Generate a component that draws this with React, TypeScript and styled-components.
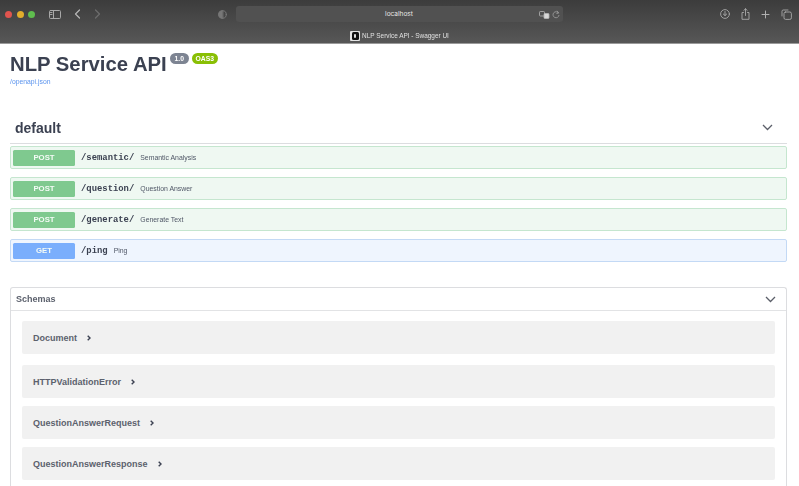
import React from "react";
import styled, { createGlobalStyle } from "styled-components";

const Global = createGlobalStyle`
  html, body { margin: 0; padding: 0; background: #fff; }
  body { width: 799px; height: 486px; overflow: hidden; font-family: "Liberation Sans", Arial, sans-serif; }
  #root { width: 799px; height: 486px; overflow: hidden; }
`;

const Shell = styled.div`
  width: 799px;
  height: 486px;
  overflow: hidden;
  filter: blur(0.6px);
`;

const Chrome = styled.header`
  height: 44px;
  box-sizing: border-box;
  background: linear-gradient(#3c3c3c, #575757);
  border-bottom: 1px solid #9a9a9a;
  display: flex;
  flex-direction: column;
`;

const Toolbar = styled.div`
  height: 28px;
  display: flex;
  align-items: center;
  padding: 0 7px 1px 5px;
`;

const Dot = styled.span<{ $c: string }>`
  width: 7px;
  height: 7px;
  border-radius: 50%;
  background: ${(p) => p.$c};
  margin-right: 4.5px;
`;

const Icon = styled.svg<{ $ml: number }>`
  flex: none;
  margin-left: ${(p) => p.$ml}px;
  fill: none;
  stroke-linecap: round;
  stroke-linejoin: round;
`;

const UrlBar = styled.div`
  width: 327px;
  height: 16px;
  margin-left: 9px;
  border-radius: 3px;
  background: #515151;
  position: relative;
  display: flex;
  align-items: center;
  justify-content: center;
  color: #e8e8e8;
  font-size: 6.5px;
  font-family: "Inter", sans-serif;
`;

const UrlTools = styled.div`
  position: absolute;
  right: 3px;
  top: 4px;
  display: flex;
  align-items: center;
  gap: 2px;
`;

const Spacer = styled.div`
  flex: 1;
`;

const TabStrip = styled.div`
  flex: 1;
  display: flex;
  align-items: center;
  justify-content: center;
  gap: 2px;
  color: #e0e0e0;
  font-size: 6.45px;
  padding: 0 0 1px 0;
`;

const Favicon = styled.span`
  width: 10px;
  height: 10px;
  border-radius: 1px;
  background: #e4e4e4;
  display: flex;
  align-items: center;
  justify-content: center;
`;

const FaviconCore = styled.span`
  width: 7px;
  height: 8px;
  border-radius: 1.5px;
  background: #111;
  display: flex;
  align-items: center;
  justify-content: center;
  &::after {
    content: "";
    width: 2px;
    height: 4px;
    border-radius: 1px;
    background: #ddd;
  }
`;

const Main = styled.main`
  padding: 0 12px 0 10px;
`;

const TitleRow = styled.div`
  display: flex;
  align-items: flex-start;
  height: 28px;
  padding-top: 7px;
`;

const Title = styled.h1`
  margin: 0;
  font-size: 20.3px;
  line-height: 26px;
  font-weight: 700;
  color: #3b4151;
`;

const Badge = styled.span<{ $bg: string; $ml: number; $w: number }>`
  width: ${(p) => p.$w}px;
  height: 11px;
  margin: 2px 0 0 ${(p) => p.$ml}px;
  border-radius: 6px;
  background: ${(p) => p.$bg};
  color: #fff;
  font-size: 6.8px;
  font-weight: 700;
  line-height: 11px;
  text-align: center;
`;

const SpecLink = styled.a`
  display: block;
  margin-top: -1px;
  height: 8px;
  line-height: 8px;
  font-size: 6.8px;
  color: #5b94ee;
`;

const TagRow = styled.div`
  margin-top: 26px;
  height: 32px;
  box-sizing: border-box;
  border-bottom: 1px solid #dcdde0;
  display: flex;
  align-items: center;
  justify-content: space-between;
  padding: 0 14px 0 5px;
  margin-bottom: 2px;
`;

const TagName = styled.h2`
  margin: 0;
  font-size: 14px;
  font-weight: 700;
  color: #3b4151;
`;

const OpList = styled.div`
  display: flex;
  flex-direction: column;
  gap: 8px;
`;

const Op = styled.div<{ $get?: boolean }>`
  height: 23px;
  box-sizing: border-box;
  border: 1px solid ${(p) => (p.$get ? "#c3d9f5" : "#c5e6cf")};
  border-radius: 2px;
  background: ${(p) => (p.$get ? "#eff5fe" : "#eff8f2")};
  display: flex;
  align-items: center;
  padding-left: 2px;
`;

const Method = styled.span<{ $get?: boolean }>`
  width: 62px;
  height: 16px;
  border-radius: 1.5px;
  background: ${(p) => (p.$get ? "#7aaefc" : "#7fc98f")};
  color: #f4fbf6;
  font-size: 7.8px;
  font-weight: 700;
  display: flex;
  align-items: center;
  justify-content: center;
  flex: none;
`;

const OpPath = styled.span`
  margin-left: 6px;
  font-family: "Liberation Mono", monospace;
  font-size: 8.9px;
  font-weight: 700;
  color: #3b4151;
`;

const OpDesc = styled.span`
  margin-left: 6px;
  font-size: 6.9px;
  color: #4f5666;
`;

const Schemas = styled.section`
  margin-top: 25px;
  height: 230px;
  box-sizing: border-box;
  border: 1px solid #dcdde0;
  border-bottom: 0;
  border-radius: 3px 3px 0 0;
`;

const SchemasHead = styled.div`
  height: 23px;
  box-sizing: border-box;
  border-bottom: 1px solid #e2e3e5;
  display: flex;
  align-items: center;
  justify-content: space-between;
  padding: 0 10px 0 5px;
  font-size: 9px;
  font-weight: 700;
  color: #5c616d;
`;

const SchemaList = styled.div`
  padding: 10px 11px 0 11px;
  display: flex;
  flex-direction: column;
`;

const Model = styled.div<{ $mt: number }>`
  height: 33px;
  box-sizing: border-box;
  margin-top: ${(p) => p.$mt}px;
  border-radius: 2px;
  background: #f1f1f1;
  display: flex;
  align-items: center;
  padding: 0 0 0 11px;
  font-size: 9px;
  font-weight: 700;
  color: #5c616d;
`;

const ModelArrow = styled.svg`
  margin-left: 10px;
  fill: none;
  stroke: #3b4151;
  stroke-width: 1.4;
`;

const Chevron = ({ w = 11 }: { w?: number }) => (
  <svg width={w} height="7" viewBox="0 0 11 7" fill="none" stroke="#5b5f69" strokeWidth="1.3">
    <path d="M1 1l4.5 4.5L10 1" />
  </svg>
);

const ops = [
  { m: "POST", p: "/semantic/", d: "Semantic Analysis" },
  { m: "POST", p: "/question/", d: "Question Answer" },
  { m: "POST", p: "/generate/", d: "Generate Text" },
  { m: "GET", p: "/ping", d: "Ping" },
];

const models = [
  { n: "Document", mt: 0 },
  { n: "HTTPValidationError", mt: 11 },
  { n: "QuestionAnswerRequest", mt: 8 },
  { n: "QuestionAnswerResponse", mt: 8 },
];

export default function App() {
  return (
    <Shell>
      <Global />
      <Chrome>
        <Toolbar>
          <Dot $c="#e0544e" />
          <Dot $c="#e2ad2c" />
          <Dot $c="#5fbd4e" />
          <Icon $ml={9} width="12" height="9" viewBox="0 0 12 9" stroke="#a8a8a8" strokeWidth="1">
            <rect x="0.5" y="0.5" width="11" height="8" rx="1" />
            <path d="M4.5 .5v8M1.5 2.5h1.5M1.5 4.5h1.5" />
          </Icon>
          <Icon $ml={13} width="7" height="10" viewBox="0 0 7 10" stroke="#b8b8b8" strokeWidth="1.2">
            <path d="M5.5 1L1.5 5l4 4" />
          </Icon>
          <Icon $ml={13} width="7" height="10" viewBox="0 0 7 10" stroke="#6d6d6d" strokeWidth="1.2">
            <path d="M1.5 1l4 4-4 4" />
          </Icon>
          <Icon $ml={117} width="9" height="9" viewBox="0 0 9 9" stroke="#777" strokeWidth="1">
            <circle cx="4.5" cy="4.5" r="3.8" />
            <path d="M4.5 .7a3.8 3.8 0 000 7.6z" fill="#777" />
          </Icon>
          <UrlBar>
            localhost
            <UrlTools>
              <svg width="11" height="8" viewBox="0 0 11 8" fill="none" stroke="#b5b5b5" strokeWidth="0.8">
                <rect x="0.5" y="0.5" width="5" height="4.5" rx="0.8" />
                <rect x="5" y="2.5" width="5" height="5" rx="0.8" fill="#d8d8d8" />
              </svg>
              <svg width="8" height="9" viewBox="0 0 8 9" fill="none" stroke="#999" strokeWidth="0.9">
                <path d="M6.6 3.2A3 3 0 1 0 7 5M5 .8l1.7 2.2L4.4 3.6" />
              </svg>
            </UrlTools>
          </UrlBar>
          <Spacer />
          <Icon $ml={0} width="10" height="10" viewBox="0 0 10 10" stroke="#a9a9a9" strokeWidth="0.9">
            <circle cx="5" cy="5" r="4.4" />
            <path d="M5 2.5v4M3.3 5L5 6.6 6.7 5" />
          </Icon>
          <Icon $ml={11} width="9" height="12" viewBox="0 0 9 12" stroke="#a9a9a9" strokeWidth="0.9">
            <path d="M2.5 4.5H1v6.8h7V4.5H6.5M4.5 7.5V.8M2.8 2.4L4.5.8l1.7 1.6" />
          </Icon>
          <Icon $ml={11} width="9" height="9" viewBox="0 0 9 9" stroke="#b0b0b0" strokeWidth="1">
            <path d="M4.5 1v7M1 4.5h7" />
          </Icon>
          <Icon $ml={11} width="11" height="11" viewBox="0 0 11 11" stroke="#a9a9a9" strokeWidth="0.9">
            <rect x="3" y="3" width="7.4" height="7.4" rx="1.6" />
            <path d="M1 7V2.2C1 1.5 1.5 1 2.2 1H7" />
          </Icon>
        </Toolbar>
        <TabStrip>
          <Favicon>
            <FaviconCore />
          </Favicon>
          NLP Service API - Swagger UI
        </TabStrip>
      </Chrome>
      <Main>
        <TitleRow>
          <Title>NLP Service API</Title>
          <Badge $bg="#7d8492" $ml={3} $w={19}>1.0</Badge>
          <Badge $bg="#89bf04" $ml={3} $w={26}>OAS3</Badge>
        </TitleRow>
        <SpecLink>/openapi.json</SpecLink>
        <TagRow>
          <TagName>default</TagName>
          <Chevron />
        </TagRow>
        <OpList>
          {ops.map((o) => (
            <Op key={o.p} $get={o.m === "GET"}>
              <Method $get={o.m === "GET"}>{o.m}</Method>
              <OpPath>{o.p}</OpPath>
              <OpDesc>{o.d}</OpDesc>
            </Op>
          ))}
        </OpList>
        <Schemas>
          <SchemasHead>
            Schemas
            <Chevron />
          </SchemasHead>
          <SchemaList>
            {models.map((m) => (
              <Model key={m.n} $mt={m.mt}>
                {m.n}
                <ModelArrow width="4" height="6" viewBox="0 0 4 6">
                  <path d="M.7 .8L3 3 .7 5.2" />
                </ModelArrow>
              </Model>
            ))}
          </SchemaList>
        </Schemas>
      </Main>
    </Shell>
  );
}
